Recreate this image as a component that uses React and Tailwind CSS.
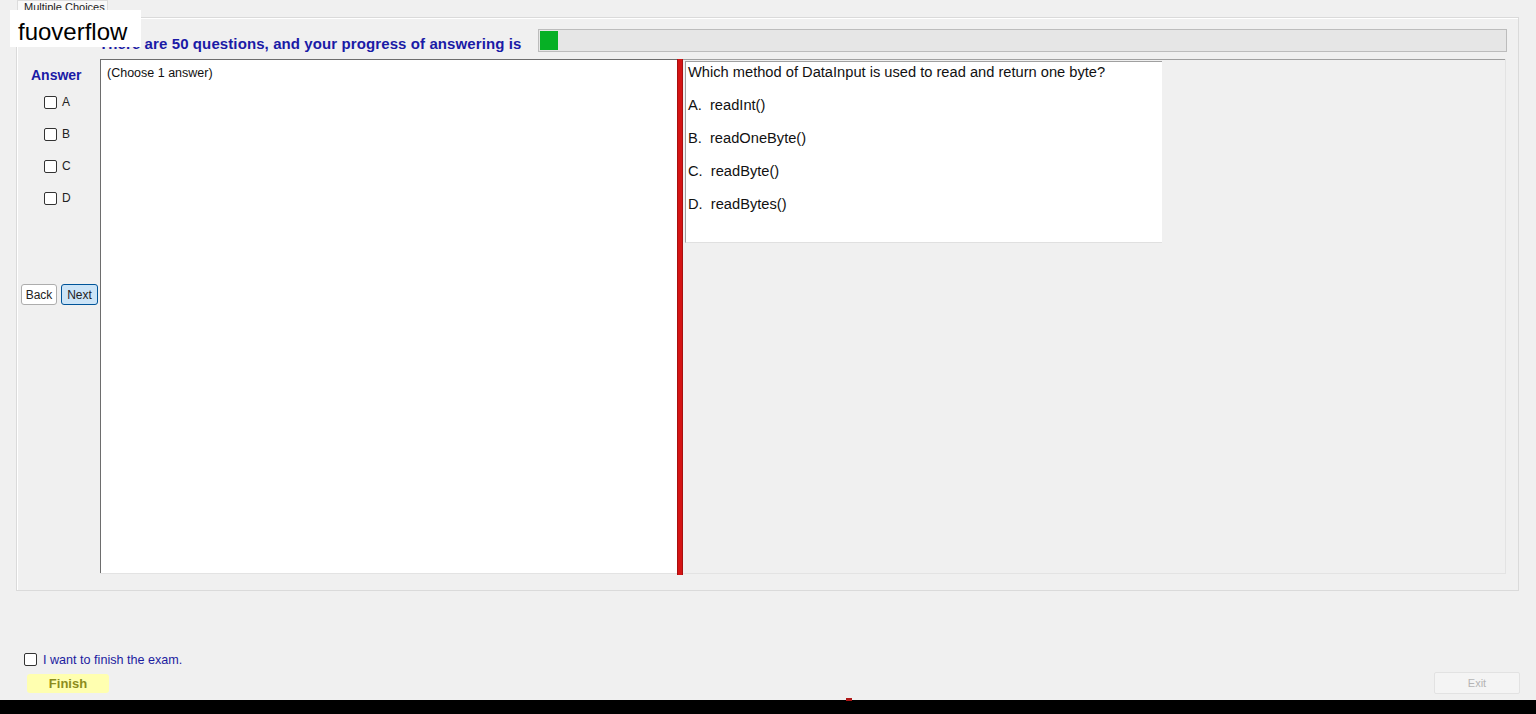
const font = { fontFamily: '"Liberation Sans", Arial, sans-serif' };

const Box = () => (
    <span className="inline-block w-[13px] h-[13px] bg-white border border-[#333333] rounded-[2px]" />
);

const options = ['A.  readInt()', 'B.  readOneByte()', 'C.  readByte()', 'D.  readBytes()'];

export default function App() {
    return (
        <div style={font} className="relative w-[1536px] h-[714px] overflow-hidden bg-[#f0f0f0] flex flex-col text-black">
            {/* tab header */}
            <div className="h-[17px] pl-[17px] flex">
                <div className="w-[91px] h-[17px] bg-[#f9f9f9] border border-b-0 border-[#dcdcdc] pl-[6px] text-[11px] leading-[12px] text-[#222]">
                    Multiple Choices
                </div>
            </div>

            {/* tab page */}
            <div className="ml-[16px] w-[1503px] h-[574px] border border-[#dadada] shadow-[inset_1px_1px_0_#ffffff] flex flex-col">
                <div className="mt-[11px] h-[23px] flex">
                    <div className="ml-[82px] pt-[7px] text-[15px] leading-[16px] tracking-[0.1px] font-bold text-[#1a1aa6] whitespace-nowrap">
                        There are 50 questions, and your progress of answering is
                    </div>
                    <div className="ml-[17px] w-[969px] h-[23px] border border-[#bcbcbc] bg-[#e6e6e6] flex p-[1px]">
                        <div className="w-[18px] h-full bg-[#06b025]" />
                    </div>
                </div>

                <div className="mt-[7px] flex">
                    {/* answer column */}
                    <div className="w-[83px] flex flex-col">
                        <div className="pl-[14px] pt-[8px] text-[14px] leading-[16px] font-bold text-[#1a1aa6]">Answer</div>
                        <div className="mt-[3px] flex flex-col">
                            {['A', 'B', 'C', 'D'].map((l) => (
                                <div key={l} className="h-[32px] pl-[27px] flex items-center">
                                    <Box />
                                    <span className="ml-[5px] text-[12px] leading-[14px] text-[#222]">{l}</span>
                                </div>
                            ))}
                        </div>
                        <div className="mt-[70px] pl-[4px] flex gap-[4px]">
                            <button className="w-[36px] h-[21px] bg-white border border-[#adadad] rounded-[3px] text-[12px] text-[#222]">Back</button>
                            <button className="w-[37px] h-[21px] bg-[#cce4f7] border border-[#005499] rounded-[3px] text-[12px] text-[#222]">Next</button>
                        </div>
                    </div>

                    {/* main panel */}
                    <div className="w-[1406px] h-[515px] flex border-b border-r border-[#e3e3e3]">
                        <div className="w-[577px] h-full bg-white border-l border-t border-[#6d6d6d] pl-[6px] pt-[6px] text-[12.5px] leading-[14px] text-[#111]">
                            (Choose 1 answer)
                        </div>
                        <div className="w-[6px] h-[516px] bg-[#d41414] border-l border-r border-[#a80f0f]" />
                        <div className="flex-1 h-full border-t border-[#a0a0a0] pt-[1px] pl-[2px]">
                            <div className="w-[477px] h-[182px] bg-white border-l border-t border-[#a0a0a0] border-b border-b-[#e0e0e0] pl-[2px] text-[14.67px] leading-[20px] text-[#111]">
                                <div className="h-[33px]">Which method of DataInput is used to read and return one byte?</div>
                                {options.map((o) => (
                                    <div key={o} className="h-[33px] whitespace-pre">{o}</div>
                                ))}
                            </div>
                        </div>
                    </div>
                </div>
            </div>

            {/* finish area */}
            <div className="mt-[61px] h-[14px] pl-[24px] flex items-center">
                <Box />
                <span className="ml-[6px] mt-[2px] text-[12.6px] leading-[14px] text-[#1c1ca0]">I want to finish the exam.</span>
            </div>
            <div className="mt-[6px] flex justify-between items-start">
                <button className="ml-[27px] mt-[2px] w-[82px] h-[19px] bg-[#ffffb0] rounded-[3px] text-[13px] font-bold text-[#8c8c1c] leading-[19px]">
                    Finish
                </button>
                <button className="mr-[16px] w-[86px] h-[22px] bg-[#f4f4f4] border border-[#e2e2e2] rounded-[2px] text-[11px] text-[#b4b4b4]">
                    Exit
                </button>
            </div>
            <div className="mt-auto h-[14px] bg-black relative">
                <div className="absolute left-[846px] top-[-2px] w-[6px] h-[3px] bg-[#b01818]" />
            </div>

            {/* watermark */}
            <div className="absolute left-[10px] top-[10px] w-[131px] h-[37px] bg-white pl-[8px] pt-[3px] text-[24px] leading-[37px] text-black">
                fuoverflow
            </div>
        </div>
    );
}
